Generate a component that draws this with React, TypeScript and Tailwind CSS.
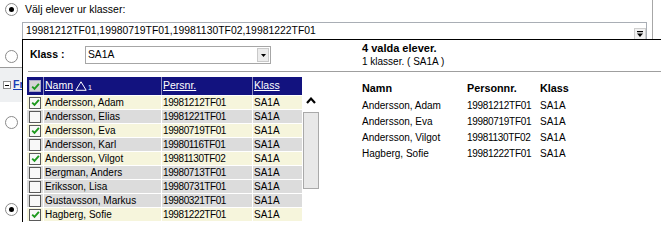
import React from "react";

type Row = { name: string; pnr: string; checked: boolean };

const rows: Row[] = [
  { name: "Andersson, Adam", pnr: "19981212TF01", checked: true },
  { name: "Andersson, Elias", pnr: "19981221TF01", checked: false },
  { name: "Andersson, Eva", pnr: "19980719TF01", checked: true },
  { name: "Andersson, Karl", pnr: "19980116TF01", checked: false },
  { name: "Andersson, Vilgot", pnr: "19981130TF02", checked: true },
  { name: "Bergman, Anders", pnr: "19980713TF01", checked: false },
  { name: "Eriksson, Lisa", pnr: "19980731TF01", checked: false },
  { name: "Gustavsson, Markus", pnr: "19980321TF01", checked: false },
  { name: "Hagberg, Sofie", pnr: "19981222TF01", checked: true },
];

function Radio({ on }: { on?: boolean }) {
  return (
    <span className="flex items-center justify-center w-[13px] h-[13px] rounded-full border border-[#8a8a8a] bg-white shrink-0">
      {on && <span className="w-[5px] h-[5px] rounded-full bg-black" />}
    </span>
  );
}

function Check({ checked, header }: { checked: boolean; header?: boolean }) {
  return (
    <span
      className={
        header
          ? "flex items-center justify-center w-[12px] h-[12px] border border-[#a8a8c8] bg-[#d4d4d4]"
          : "flex items-center justify-center w-[12px] h-[12px] border border-[#5a5a5a] bg-[#f8f8f8]"
      }
    >
      {checked && (
        <svg width="9" height="9" viewBox="0 0 9 9">
          <path d="M1.2 4.6 L3.5 6.9 L7.9 1.8" stroke="#1e9a1e" strokeWidth="1.9" fill="none" />
        </svg>
      )}
    </span>
  );
}

export default function App() {
  return (
    <div className="relative w-[661px] h-[222px] overflow-hidden bg-white text-black font-['Liberation_Sans',Arial,sans-serif]">
      {/* underlying page */}
      <div className="w-[653px] h-full border-r border-[#a7a7a7]">
        <div className="flex items-center h-[19px] pl-[5px] gap-[7px]">
          <Radio on />
          <span className="text-[10.5px] leading-none">Välj elever ur klasser:</span>
        </div>
        <div className="ml-[22px] mt-[3px] w-[625px] h-[26px] border border-[#a9aeb5] flex justify-between">
          <span className="pl-[3px] pt-[2px] text-[10.4px] leading-[12px]">
            19981212TF01,19980719TF01,19981130TF02,19981222TF01
          </span>
          <span className="mt-[5px] mr-0 w-[12px] h-[14px] border border-[#cfcfcf] bg-[#f2f2f2] flex justify-center pt-[2px]">
            <svg width="6" height="7" viewBox="0 0 6 7">
              <rect x="0" y="0" width="6" height="1.2" fill="#000" />
              <path d="M0 2.5 H6 L3 6 Z" fill="#000" />
            </svg>
          </span>
        </div>
        <div className="flex items-center h-[16px] pl-[5px]">
          <Radio />
        </div>
        <div className="mt-[3px] h-px bg-[#9a9a9a]" />
        <div className="h-[34px] bg-[#eef0f2] flex items-center pl-[3px] gap-[2px]">
          <span className="flex items-center justify-center w-[8px] h-[8px] border border-[#8c8c8c] bg-white">
            <span className="w-[4px] h-px bg-black" />
          </span>
          <span className="text-[10.5px] font-bold text-[#1a3fb5] underline">Fr</span>
        </div>
        <div className="flex items-center h-[40px] pl-[5px]">
          <Radio />
        </div>
        <div className="flex items-center h-[134px] pl-[5px]">
          <Radio on />
        </div>
      </div>

      {/* popup */}
      <div className="absolute left-[22px] top-[39px] right-[-4px] bottom-[-10px] border-l border-t border-black bg-white">
        <div className="flex items-start h-[31px] pt-[2px] pl-[7px]">
          <div className="w-[55px] h-[18px] mt-[4px] flex items-center text-[10.5px] font-bold">Klass :</div>
          <div className="w-[186px] h-[18px] mt-[4px] border border-[#a6a6a6] flex items-center justify-between pl-[2px] pr-px">
            <span className="text-[10.3px]">SA1A</span>
            <span className="w-[12px] h-[14px] border border-[#c9c9c9] bg-[#ececec] flex items-center justify-center">
              <svg width="5" height="3" viewBox="0 0 5 3">
                <path d="M0 0 H5 L2.5 3 Z" fill="#000" />
              </svg>
            </span>
          </div>
          <div className="ml-[91px] flex flex-col">
            <span className="text-[11px] font-bold leading-[13px]">4 valda elever.</span>
            <span className="text-[10px] leading-[13px]">1 klasser. ( SA1A )</span>
          </div>
        </div>
        <div className="ml-[5px] h-px bg-[#9f9f9f]" />

        <div className="flex items-start">
          {/* grid */}
          <div className="ml-[4px] mt-[5px] w-[275px] text-[10px]">
            <div className="flex h-[18px] bg-[#12127f] text-white">
              <div className="w-[16px] flex items-center justify-center">
                <Check checked header />
              </div>
              <div className="w-[118px] border-l border-[#9090c0] flex items-center pl-px gap-[2px]">
                <span className="underline text-[10.5px]">Namn</span>
                <svg width="12" height="10" viewBox="0 0 12 10">
                  <path d="M6 0.8 L11.2 9.3 H0.8 Z" fill="none" stroke="#fff" strokeWidth="1" />
                </svg>
                <span className="text-[7px] mt-[4px] -ml-px">1</span>
              </div>
              <div className="w-[91px] border-l border-[#9090c0] flex items-center pl-px">
                <span className="underline text-[10.5px]">Persnr.</span>
              </div>
              <div className="w-[50px] border-l border-[#9090c0] flex items-center pl-px">
                <span className="underline text-[10.5px]">Klass</span>
              </div>
            </div>
            {rows.map((r) => (
              <div
                key={r.pnr}
                className={
                  r.checked
                    ? "flex h-[14px] border-t border-white bg-[#f6f5dc]"
                    : "flex h-[14px] border-t border-white bg-[#dcdcdc]"
                }
              >
                <div className="w-[16px] flex items-center justify-center">
                  <Check checked={r.checked} />
                </div>
                <div className="w-[118px] border-l border-white flex items-center pl-px leading-none">{r.name}</div>
                <div className="w-[91px] border-l border-white flex items-center pl-px leading-none tracking-[-0.4px]">{r.pnr}</div>
                <div className="w-[50px] border-l border-white flex items-center pl-px leading-none">SA1A</div>
              </div>
            ))}
          </div>

          {/* scrollbar */}
          <div className="w-[18px] flex flex-col items-center pt-[25px]">
            <svg width="10" height="7" viewBox="0 0 10 7">
              <path d="M1 6 L5 1.6 L9 6" fill="none" stroke="#000" strokeWidth="2.2" />
            </svg>
            <div className="mt-[8px] w-[16px] h-[77px] bg-[#e8e8e8] border border-[#a9a9a9]" />
          </div>

          {/* selected list */}
          <div className="ml-[42px] mt-[8px] grid grid-cols-[105px_73px_auto] text-[10px]">
            <span className="h-[17px] flex items-center font-bold text-[10.8px]">Namn</span>
            <span className="h-[17px] flex items-center font-bold text-[10.8px]">Personnr.</span>
            <span className="h-[17px] flex items-center font-bold text-[10.8px]">Klass</span>
            {rows
              .filter((r) => r.checked)
              .map((r) => (
                <React.Fragment key={r.pnr}>
                  <span className="h-[16px] flex items-center">{r.name}</span>
                  <span className="h-[16px] flex items-center tracking-[-0.3px]">{r.pnr}</span>
                  <span className="h-[16px] flex items-center">SA1A</span>
                </React.Fragment>
              ))}
          </div>
        </div>
      </div>
    </div>
  );
}
